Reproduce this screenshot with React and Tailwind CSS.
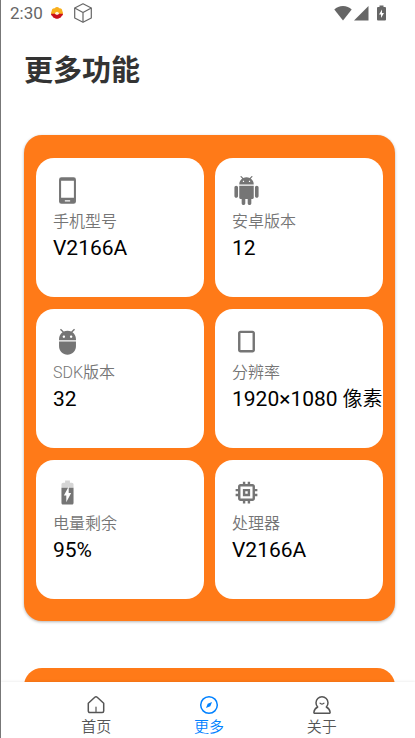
import React from "react";
import { MdAdb, MdCropPortrait, MdBatteryCharging90, MdMemory } from "react-icons/md";

function PhoneIcon({ className }) {
  return (
    <svg viewBox="0 0 24 24" className={className} fill="currentColor" fillRule="evenodd" aria-hidden="true">
      <path d="M7 1h10a2 2 0 0 1 2 2v18a2 2 0 0 1-2 2H7a2 2 0 0 1-2-2V3a2 2 0 0 1 2-2zM6.7 4v14h10.6V4zM9.8 20v1h4.4v-1z" />
    </svg>
  );
}

function AndroidIcon({ className }) {
  return (
    <svg viewBox="0 0 24 24" className={className} fill="currentColor" aria-hidden="true">
      <path d="M6 18c0 .55.45 1 1 1h1v3.5c0 .83.67 1.5 1.5 1.5s1.5-.67 1.5-1.5V19h2v3.5c0 .83.67 1.5 1.5 1.5s1.5-.67 1.5-1.5V19h1c.55 0 1-.45 1-1V8H6v10zM3.5 8C2.67 8 2 8.67 2 9.5v7c0 .83.67 1.5 1.5 1.5S5 17.33 5 16.5v-7C5 8.67 4.33 8 3.5 8zm17 0c-.83 0-1.5.67-1.5 1.5v7c0 .83.67 1.5 1.5 1.5s1.5-.67 1.5-1.5v-7c0-.83-.67-1.5-1.5-1.5zm-4.97-5.84l1.3-1.3c.2-.2.2-.51 0-.71-.2-.2-.51-.2-.71 0l-1.48 1.48C13.85 1.23 12.95 1 12 1c-.96 0-1.86.23-2.66.63L7.85.15c-.2-.2-.51-.2-.71 0-.2.2-.2.51 0 .71l1.31 1.31C6.97 3.26 6 5.01 6 7h12c0-1.99-.97-3.75-2.47-4.84zM10 5H9V4h1v1zm5 0h-1V4h1v1z" />
    </svg>
  );
}

function PetalLogo() {
  return (
    <svg viewBox="0 0 24 24" className="size-3" aria-hidden="true">
      <g fill="#f9b01e">
        <circle cx="12" cy="5" r="5" />
        <circle cx="6.500" cy="7.500" r="5" />
        <circle cx="17.500" cy="7.500" r="5" />
        <circle cx="4.500" cy="12" r="4.500" />
        <circle cx="19.500" cy="12" r="4.500" />
      </g>
      <path d="M0 13.500h24c0 3-2 4-3 5-1 3-4 3-5 4-2 1.500-6 1.500-8 0-1-1-4-1-5-4-1-1-3-2-3-5z" fill="#c9101c" />
      <path d="M8 14a4 4 0 0 1 8 0l-4 2z" fill="#fff6d8" />
    </svg>
  );
}

function BoxIcon() {
  return (
    <svg viewBox="0 0 20 20" className="size-5" fill="none" stroke="#666" strokeWidth="1.2" strokeLinejoin="round" aria-hidden="true">
      <path d="M10 .800 18.300 5v10L10 19.200 1.700 15V5z" />
      <path d="M1.700 5 10 9.500 18.300 5M10 9.500v9.700" />
    </svg>
  );
}

function StatusBar() {
  return (
    <header className="flex h-[26px] shrink-0 items-center justify-between pr-[29px] pl-[9px] text-[#666]">
      <div className="flex items-center">
        <span className="text-[17px] leading-5">2:30</span>
        <span className="ml-2"><PetalLogo /></span>
        <span className="ml-[10px]"><BoxIcon /></span>
      </div>
      <div className="flex items-center gap-[2px]">
        <svg viewBox="0 0 18 16" className="h-4 w-[18px]" fill="currentColor" aria-hidden="true">
          <path d="M9 15.500.300 4.500C2.500 2.300 5.500 1 9 1s6.500 1.300 8.700 3.500z" />
        </svg>
        <svg viewBox="0 0 15 16" className="h-4 w-[15px]" fill="currentColor" aria-hidden="true">
          <path d="M14.500 1v14.500H0z" />
        </svg>
        <svg viewBox="0 0 9 16" className="ml-[6px] h-4 w-[9px]" fill="currentColor" fillRule="evenodd" aria-hidden="true">
          <path d="M2.500.500h4V2H8a1 1 0 0 1 1 1v11.500a1 1 0 0 1-1 1H1a1 1 0 0 1-1-1V3a1 1 0 0 1 1-1h1.500zM5 4.500 2 9.500h2V13l3-5H5z" />
        </svg>
      </div>
    </header>
  );
}

const cards = [
  { Icon: PhoneIcon, label: "手机型号", value: "V2166A" },
  { Icon: AndroidIcon, label: "安卓版本", value: "12" },
  { Icon: MdAdb, label: "SDK版本", value: "32" },
  { Icon: MdCropPortrait, label: "分辨率", value: "1920×1080", unit: "像素" },
  { Icon: MdBatteryCharging90, label: "电量剩余", value: "95%" },
  { Icon: MdMemory, label: "处理器", value: "V2166A" },
];

function InfoCard({ Icon, label, value, unit }) {
  return (
    <li className="h-[139px] min-w-0 rounded-[18px] bg-white pt-[18px] pl-[17px]">
      <Icon className="size-[29px] text-[#757575]" />
      <p className="mt-[5px] text-base leading-6 font-[350] text-[#757575]">{label}</p>
      <p className="text-[21px] leading-7 whitespace-nowrap text-black">
        {value}
        {unit && <span className="text-xl leading-7 font-[350]"> {unit}</span>}
      </p>
    </li>
  );
}

function HomeIcon() {
  return (
    <svg viewBox="0 0 20 20" className="size-5 shrink-0" fill="none" stroke="currentColor" strokeWidth="1.500" strokeLinejoin="round" strokeLinecap="round" aria-hidden="true">
      <path d="M2.300 8.200 8.800 2.200a1.800 1.800 0 0 1 2.400 0l6.500 6v7.900a1.500 1.500 0 0 1-1.500 1.500H3.800a1.500 1.500 0 0 1-1.500-1.500z" />
      <path d="M10 12v4.500" strokeWidth="1.200" />
    </svg>
  );
}

function CompassIcon() {
  return (
    <svg viewBox="0 0 20 20" className="size-5 shrink-0" fill="none" stroke="currentColor" strokeWidth="1.500" aria-hidden="true">
      <circle cx="10" cy="10" r="8.300" />
      <path d="M13 7 11.300 11.300 7 13l1.700-4.300z" fill="currentColor" stroke="none" />
    </svg>
  );
}

function PersonIcon() {
  return (
    <svg viewBox="0 0 20 20" className="size-5 shrink-0" fill="none" stroke="currentColor" strokeWidth="1.500" strokeLinejoin="round" strokeLinecap="round" aria-hidden="true">
      <path d="M5.700 12a6 6 0 1 1 8.600 0c2.300 1.200 3.600 3 3.800 5.300a.8.8 0 0 1-.8.900H2.700a.8.8 0 0 1-.8-.900c.200-2.300 1.500-4.100 3.800-5.300z" />
      <path d="M8 8.200c1 1.200 3 1.200 4 0" strokeWidth="1.200" />
    </svg>
  );
}

const tabs = [
  { Icon: HomeIcon, label: "首页" },
  { Icon: CompassIcon, label: "更多", active: true },
  { Icon: PersonIcon, label: "关于" },
];

export default function App() {
  return (
    <div className="flex h-screen flex-col overflow-hidden border-l border-[#777] bg-white font-[Roboto,'Noto_Sans_CJK_SC',sans-serif]">
      <StatusBar />
      <main className="min-h-0 flex-1 overflow-hidden pr-5 pl-[23px]">
        <h1 className="pt-[25px] text-[29px] leading-10 font-bold text-[#333]">更多功能</h1>
        <ul className="mt-11 grid grid-cols-2 gap-x-[11px] gap-y-3 rounded-[18px] bg-[#ff7a18] px-3 pt-[23px] pb-[22px] shadow-[0_1px_3px_rgba(0,0,0,0.3)]">
          {cards.map((card) => (
            <InfoCard key={card.label} {...card} />
          ))}
        </ul>
        <section className="mt-[47px] h-40 rounded-[18px] bg-[#ff7a18]" />
      </main>
      <nav className="flex h-14 shrink-0 bg-white pr-[37px] pl-[39px] shadow-[0_-1px_2px_rgba(0,0,0,0.06)]">
        {tabs.map(({ Icon, label, active }) => (
          <button
            key={label}
            type="button"
            aria-current={active ? "page" : undefined}
            className={`flex flex-1 flex-col items-center gap-[2px] pt-[13px] text-[15px] leading-5 font-[350] ${active ? "text-[#0081ff]" : "text-[#555]"}`}
          >
            <Icon />
            <span>{label}</span>
          </button>
        ))}
      </nav>
    </div>
  );
}
